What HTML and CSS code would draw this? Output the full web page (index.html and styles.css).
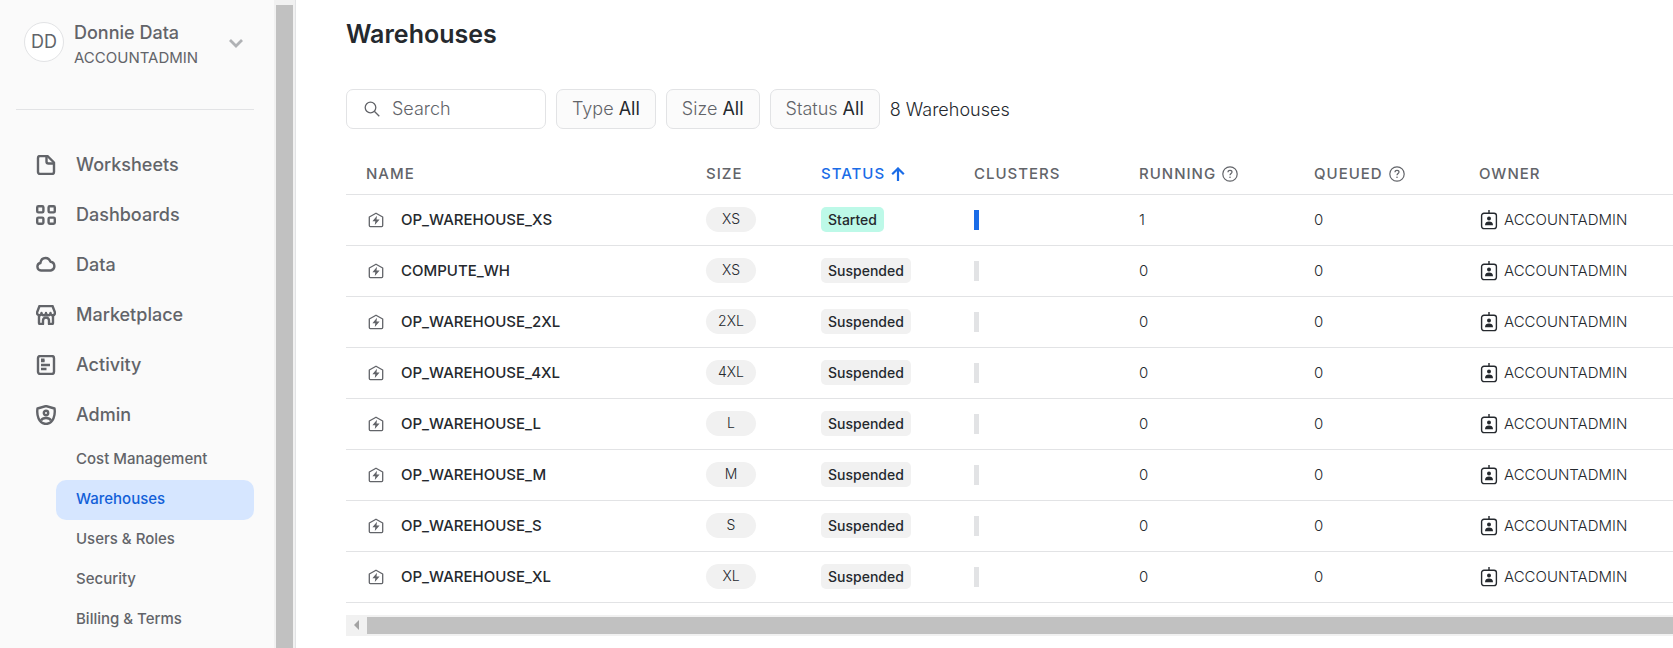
FILE: index.html
```html
<!DOCTYPE html>
<html lang="en">
<head>
<meta charset="utf-8">
<meta name="viewport" content="width=device-width, initial-scale=1">
<title>Warehouses</title>
<link rel="stylesheet" href="styles.css">
</head>
<body>
<svg class="sprite" aria-hidden="true">
  <symbol id="i-warehouse" viewBox="0 0 16 16"><path d="M1.300 5 8 1.200 14.700 5v8.600a1 1 0 0 1-1 1H2.300a1 1 0 0 1-1-1Z" fill="none" stroke="currentColor" stroke-width="1.300" stroke-linejoin="round"/><path d="M9 3.800 4.400 9.200h2.900l-.5 3.800 4.800-5.600H8.500Z" fill="currentColor"/></symbol>
  <symbol id="i-role" viewBox="0 0 18 20"><path d="M9 0v4M4 3.200h10a2.400 2.400 0 0 1 2.400 2.400v10.600a2.400 2.400 0 0 1-2.400 2.400H4a2.400 2.400 0 0 1-2.400-2.400V5.600a2.400 2.400 0 0 1 2.400-2.400Z" fill="none" stroke="currentColor" stroke-width="1.400"/><circle cx="9" cy="8.600" r="2" fill="currentColor"/><path d="M5 15.200c0-2.600 1.600-3.600 4-3.600s4 1 4 3.600Z" fill="currentColor"/></symbol>
  <symbol id="i-help" viewBox="0 0 16 16"><circle cx="8" cy="8" r="7.200" fill="none" stroke="currentColor" stroke-width="1.200"/><path d="M6 6.300C6 5 6.900 4.300 8 4.300s2 .7 2 1.800c0 1.500-2 1.500-2 3.200" fill="none" stroke="currentColor" stroke-width="1.200"/><circle cx="8" cy="11.300" r=".8" fill="currentColor"/></symbol>
</svg>
<div class="app">
  <aside class="sidebar">
    <div class="side-content">
      <button class="account" type="button">
        <span class="avatar">DD</span>
        <span class="who"><span class="who-name">Donnie Data</span><span class="who-role">ACCOUNTADMIN</span></span>
        <svg class="chevron" viewBox="0 0 14 10"><path d="m1 2 6 6 6-6" fill="none" stroke="currentColor" stroke-width="2.800"/></svg>
      </button>
      <nav class="nav">
        <a class="nav-item" href="#"><svg viewBox="0 0 20 20"><path d="M4.500 1h7L18 7.500v9.500a2 2 0 0 1-2 2H4a2 2 0 0 1-2-2V3a2 2 0 0 1 2-2Z"/><path d="M10.500 1v5.500a2 2 0 0 0 2 2H18"/></svg>Worksheets</a>
        <a class="nav-item" href="#"><svg viewBox="0 0 20 20"><rect x="1.200" y="1.200" width="6.200" height="6.200" rx="1.200"/><rect x="12.600" y="1.200" width="6.200" height="6.200" rx="1.200"/><rect x="1.200" y="12.600" width="6.200" height="6.200" rx="1.200"/><rect x="12.600" y="12.600" width="6.200" height="6.200" rx="1.200"/></svg>Dashboards</a>
        <a class="nav-item" href="#"><svg viewBox="0 0 20 20"><path d="M5 15.500a3.800 3.800 0 0 1-.6-7.500C4.800 4.900 6.800 3 9.500 3c2.500 0 4.200 1.300 4.900 3.800A4.400 4.400 0 0 1 14.800 15.500Z"/></svg>Data</a>
        <a class="nav-item" href="#"><svg viewBox="0 0 20 20"><path d="M3.500 1h13L19 7.500c0 1.800-1 2.700-2.300 2.700-1.300 0-2.200-1-2.200-2.200 0 1.300-1 2.200-2.300 2.200S10 9.300 10 8c0 1.300-.9 2.200-2.200 2.200S5.500 9.300 5.500 8c0 1.200-.9 2.200-2.200 2.200S1 9.300 1 7.500Z"/><path d="M3 10.500V18a1 1 0 0 0 1 1h3v-3.500a3 3 0 0 1 6 0V19h3a1 1 0 0 0 1-1v-7.500"/></svg>Marketplace</a>
        <a class="nav-item" href="#"><svg viewBox="0 0 20 20"><rect x="2" y="1" width="16" height="18" rx="2.200"/><path d="M5 6h3.500M5 10h9M5 14h5.500"/><path d="M5 5h3.500" stroke-width="3"/></svg>Activity</a>
        <a class="nav-item" href="#"><svg viewBox="0 0 20 20"><path d="M10 1 18.500 3.500C19.500 10 17.500 18.500 10 19 2.500 18.500.5 10 1.500 3.500Z"/><circle cx="10" cy="8" r="2.200"/><path d="M5 15.500c1-2 2.700-2.500 5-2.500s4 .5 5 2.500"/></svg>Admin</a>
        <div class="subnav">
          <a class="sub-item" href="#">Cost Management</a>
          <a class="sub-item active" href="#" aria-current="page">Warehouses</a>
          <a class="sub-item" href="#">Users &amp; Roles</a>
          <a class="sub-item" href="#">Security</a>
          <a class="sub-item" href="#">Billing &amp; Terms</a>
        </div>
      </nav>
    </div>
    <div class="vbar"><div class="vthumb"></div></div>
  </aside>
  <main class="main">
    <h1>Warehouses</h1>
    <div class="filters">
      <label class="search"><svg viewBox="0 0 16 16"><circle cx="6.500" cy="6.500" r="5.300"/><path d="m10.300 10.300 5 5"/></svg><input type="text" placeholder="Search" aria-label="Search"></label>
      <button class="filter" type="button">Type <b>All</b></button>
      <button class="filter" type="button">Size <b>All</b></button>
      <button class="filter" type="button">Status <b>All</b></button>
      <span class="count">8 Warehouses</span>
    </div>
    <table>
      <colgroup><col class="c-name"><col class="c-size"><col class="c-status"><col class="c-clusters"><col class="c-running"><col class="c-queued"><col></colgroup>
      <thead><tr>
        <th>NAME</th><th>SIZE</th>
        <th class="sorted" aria-sort="ascending"><span class="head">STATUS<svg class="arrow" viewBox="0 0 14 14"><path d="M7 14V1.800M1.200 7.200 7 1.500l5.800 5.700" fill="none" stroke="currentColor" stroke-width="2.200"/></svg></span></th>
        <th>CLUSTERS</th>
        <th><span class="head">RUNNING<svg class="help"><use href="#i-help"/></svg></span></th>
        <th><span class="head">QUEUED<svg class="help"><use href="#i-help"/></svg></span></th>
        <th>OWNER</th>
      </tr></thead>
      <tbody>
        <tr><td><span class="name"><svg><use href="#i-warehouse"/></svg>OP_WAREHOUSE_XS</span></td><td><span class="size">XS</span></td><td><span class="badge started">Started</span></td><td><span class="bar on"></span></td><td>1</td><td>0</td><td><span class="owner"><svg><use href="#i-role"/></svg>ACCOUNTADMIN</span></td></tr>
        <tr><td><span class="name"><svg><use href="#i-warehouse"/></svg>COMPUTE_WH</span></td><td><span class="size">XS</span></td><td><span class="badge">Suspended</span></td><td><span class="bar"></span></td><td>0</td><td>0</td><td><span class="owner"><svg><use href="#i-role"/></svg>ACCOUNTADMIN</span></td></tr>
        <tr><td><span class="name"><svg><use href="#i-warehouse"/></svg>OP_WAREHOUSE_2XL</span></td><td><span class="size">2XL</span></td><td><span class="badge">Suspended</span></td><td><span class="bar"></span></td><td>0</td><td>0</td><td><span class="owner"><svg><use href="#i-role"/></svg>ACCOUNTADMIN</span></td></tr>
        <tr><td><span class="name"><svg><use href="#i-warehouse"/></svg>OP_WAREHOUSE_4XL</span></td><td><span class="size">4XL</span></td><td><span class="badge">Suspended</span></td><td><span class="bar"></span></td><td>0</td><td>0</td><td><span class="owner"><svg><use href="#i-role"/></svg>ACCOUNTADMIN</span></td></tr>
        <tr><td><span class="name"><svg><use href="#i-warehouse"/></svg>OP_WAREHOUSE_L</span></td><td><span class="size">L</span></td><td><span class="badge">Suspended</span></td><td><span class="bar"></span></td><td>0</td><td>0</td><td><span class="owner"><svg><use href="#i-role"/></svg>ACCOUNTADMIN</span></td></tr>
        <tr><td><span class="name"><svg><use href="#i-warehouse"/></svg>OP_WAREHOUSE_M</span></td><td><span class="size">M</span></td><td><span class="badge">Suspended</span></td><td><span class="bar"></span></td><td>0</td><td>0</td><td><span class="owner"><svg><use href="#i-role"/></svg>ACCOUNTADMIN</span></td></tr>
        <tr><td><span class="name"><svg><use href="#i-warehouse"/></svg>OP_WAREHOUSE_S</span></td><td><span class="size">S</span></td><td><span class="badge">Suspended</span></td><td><span class="bar"></span></td><td>0</td><td>0</td><td><span class="owner"><svg><use href="#i-role"/></svg>ACCOUNTADMIN</span></td></tr>
        <tr><td><span class="name"><svg><use href="#i-warehouse"/></svg>OP_WAREHOUSE_XL</span></td><td><span class="size">XL</span></td><td><span class="badge">Suspended</span></td><td><span class="bar"></span></td><td>0</td><td>0</td><td><span class="owner"><svg><use href="#i-role"/></svg>ACCOUNTADMIN</span></td></tr>
      </tbody>
    </table>
    <div class="hbar"><svg viewBox="0 0 5 10"><path d="M5 0v10L0 5Z" fill="currentColor"/></svg><div class="hthumb"></div></div>
  </main>
</div>
</body>
</html>
```
FILE: styles.css
```css
* { box-sizing: border-box; }
body {
  margin: 0;
  background: #fff;
  color: #25292e;
  font-family: Inter, "Liberation Sans", sans-serif;
  font-size: 15px;
  line-height: 20px;
}
button, input { font: inherit; color: inherit; }
svg { display: block; flex: none; }
.sprite { display: none; }
.app { display: flex; min-height: 100vh; }

.sidebar {
  display: flex;
  flex: none;
  width: 296px;
  background: #fafafa;
  border-right: 1px solid #e2e3e5;
  color: #626469;
}
.side-content { flex: 1; padding: 0 20px 0 16px; }
.account {
  display: flex;
  align-items: flex-start;
  width: 100%;
  height: 110px;
  padding: 22px 8px 0;
  border: 0;
  border-bottom: 1px solid #e2e3e5;
  background: none;
  text-align: left;
}
.avatar {
  width: 40px;
  height: 40px;
  border: 1px solid #e2e3e5;
  border-radius: 50%;
  background: #fff;
  font-size: 18px;
  line-height: 38px;
  text-align: center;
}
.who { display: flex; flex: 1; flex-direction: column; margin-left: 10px; }
.who-name { font-size: 18px; font-weight: 500; line-height: 22px; }
.who-role { line-height: 28px; }
.chevron { width: 14px; height: 10px; margin-top: 16px; margin-right: 3px; color: #b0b2b5; }
.nav { padding-top: 30px; }
.nav-item {
  display: flex;
  align-items: center;
  gap: 20px;
  height: 50px;
  padding-left: 20px;
  color: inherit;
  font-size: 18px;
  font-weight: 500;
  line-height: 22px;
  text-decoration: none;
}
.nav-item svg {
  width: 20px;
  height: 20px;
  fill: none;
  stroke: currentColor;
  stroke-width: 2.400;
  stroke-linejoin: round;
}
.subnav { padding-left: 40px; }
.sub-item {
  display: block;
  padding: 0 0 2px 20px;
  border-radius: 10px;
  color: inherit;
  font-weight: 500;
  line-height: 38px;
  text-decoration: none;
}
.sub-item.active { background: #d6e6ff; color: #1260d8; }
.vbar { width: 21px; padding: 5px 2px 0; background: #f1f1f1; }
.vthumb { height: 100%; background: #c1c1c1; }

.main { flex: 1; min-width: 0; padding: 20px 0 12px 50px; overflow: hidden; }
h1 { margin: 0; font-size: 25px; font-weight: 600; line-height: 29px; }
.filters { display: flex; align-items: center; gap: 10px; margin-top: 40px; }
.search, .filter {
  height: 40px;
  border: 1px solid #e2e3e5;
  border-radius: 7px;
  font-size: 18px;
  font-weight: 300;
}
.search { display: flex; align-items: center; gap: 12px; width: 200px; padding: 0 17px; }
.search svg { width: 16px; height: 16px; fill: none; stroke: #626469; stroke-width: 1.300; }
.search input { width: 100%; min-width: 0; padding: 0; border: 0; outline: 0; background: none; }
.search input::placeholder { color: #626469; opacity: 1; }
.filter { padding: 0 15px; background: #fbfbfb; color: #626469; white-space: nowrap; }
.filter b { color: #25292e; font-weight: 400; }
.count { padding-top: 2px; font-size: 18px; font-weight: 300; }

table { width: 100%; margin-top: 23px; border-collapse: collapse; table-layout: fixed; }
.c-name { width: 360px; }
.c-size { width: 115px; }
.c-status { width: 153px; }
.c-clusters { width: 165px; }
.c-running { width: 175px; }
.c-queued { width: 165px; }
th, td { padding: 0; border-bottom: 1px solid #e2e3e5; text-align: left; }
th { height: 42px; padding-top: 3px; color: #626469; font-size: 15px; font-weight: 500; letter-spacing: 1px; }
td { height: 51px; font-weight: 300; }
th:first-child { padding-left: 20px; }
td:first-child { padding-left: 22px; }
.sorted { color: #1a6ce7; }
.head { display: flex; align-items: center; gap: 6px; }
.arrow { width: 14px; height: 14px; }
.help { width: 16px; height: 16px; }
.name, .owner { display: flex; align-items: center; }
.name { gap: 17px; font-weight: 500; }
.name svg { width: 16px; height: 16px; color: #626469; }
.owner { gap: 6px; }
.owner svg { width: 18px; height: 20px; }
td:last-child { padding-left: 1px; }
.size {
  display: block;
  width: 50px;
  height: 25px;
  border-radius: 13px;
  background: #f1f1f1;
  font-size: 14px;
  line-height: 23px;
  text-align: center;
}
.badge {
  display: block;
  width: fit-content;
  padding: 0 7px;
  border-radius: 5px;
  background: #f1f1f1;
  font-size: 14px;
  font-weight: 500;
  line-height: 25px;
}
.badge.started { background: #bdf9e8; }
.bar { display: block; width: 5px; height: 20px; background: #e2e3e5; }
.bar.on { background: #1a6ce7; }
.hbar { display: flex; align-items: center; height: 21px; margin-top: 12px; background: #f1f1f1; }
.hbar svg { width: 5px; height: 10px; margin: 0 8px; color: #a3a3a3; }
.hthumb { flex: 1; height: 17px; background: #c1c1c1; }
```
